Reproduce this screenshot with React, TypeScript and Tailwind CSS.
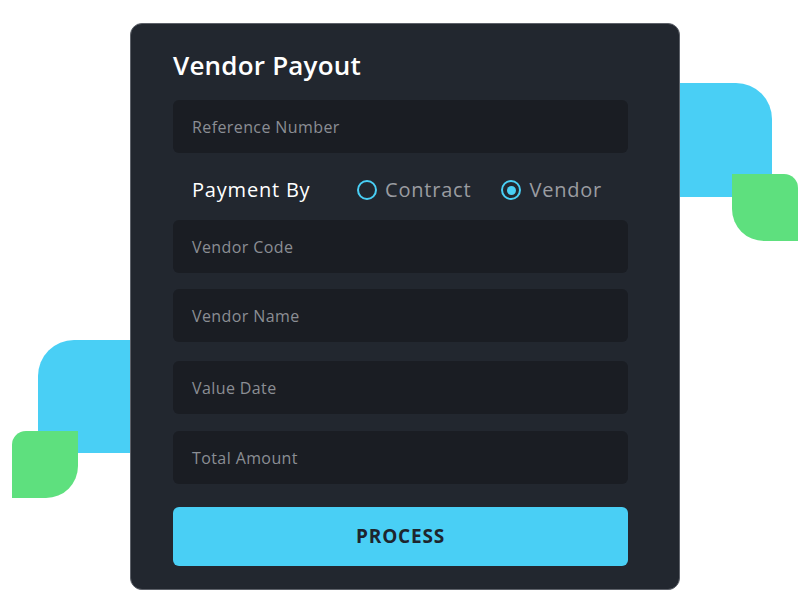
import React from 'react';

const fields = [
  { label: 'Vendor Code', mt: 'mt-[11px]' },
  { label: 'Vendor Name', mt: 'mt-[16px]' },
  { label: 'Value Date', mt: 'mt-[19px]' },
  { label: 'Total Amount', mt: 'mt-[17px]' },
];

function Radio({ label, checked }: { label: string; checked?: boolean }) {
  return (
    <label className="flex items-center gap-[8px]">
      <span className="w-[20px] h-[20px] rounded-full border-[2.5px] border-[#49cff5] flex items-center justify-center">
        {checked && <span className="w-[9px] h-[9px] rounded-full bg-[#49cff5]" />}
      </span>
      <span className="text-[20px] tracking-[0.8px] text-[#9a9ca1]">{label}</span>
    </label>
  );
}

function Field({ label, className = '' }: { label: string; className?: string }) {
  return (
    <div className={`h-[53px] w-[455px] rounded-[6px] bg-[#1a1d23] flex items-center pl-[19px] ${className}`}>
      <span className="text-[16px] tracking-[0.4px] text-[#8b8e94]">{label}</span>
    </div>
  );
}

export default function App() {
  return (
    <div className="relative w-[810px] h-[615px] bg-white overflow-hidden font-['Open_Sans',sans-serif]">
      {/* decorative blocks behind the card */}
      <div className="absolute left-[600px] top-[83px] w-[172px] h-[114px] rounded-tr-[36px] bg-[#49cff5]" />
      <div className="absolute left-[732px] top-[174px] w-[66px] h-[67px] rounded-tr-[14px] rounded-bl-[32px] bg-[#5ee07e]" />
      <div className="absolute left-[38px] top-[340px] w-[160px] h-[113px] rounded-tl-[36px] bg-[#49cff5]" />
      <div className="absolute left-[12px] top-[431px] w-[66px] h-[67px] rounded-tl-[14px] rounded-br-[32px] bg-[#5ee07e]" />

      <div className="relative z-10 ml-[130px] mt-[23px] w-[550px] rounded-[12px] border border-[#5d6169] bg-[#22272f] pl-[42px] pt-[25px] pb-[23px]">
        <h1 className="text-[26px] leading-[32px] font-semibold tracking-[0.2px] text-white">Vendor Payout</h1>

        <Field label="Reference Number" className="mt-[19px]" />

        <div className="mt-[17px] h-[40px] flex items-center pl-[19px]">
          <span className="text-[20px] tracking-[0.8px] text-white w-[165px]">Payment By</span>
          <div className="flex items-center gap-[30px]">
            <Radio label="Contract" />
            <Radio label="Vendor" checked />
          </div>
        </div>

        {fields.map((f, i) => (
          <Field key={f.label} label={f.label} className={i === 0 ? 'mt-[10px]' : f.mt} />
        ))}

        <button className="mt-[23px] h-[59px] w-[455px] rounded-[6px] bg-[#49cff5] text-[19px] font-bold tracking-[0.8px] text-[#1e252d]">
          PROCESS
        </button>
      </div>
    </div>
  );
}
